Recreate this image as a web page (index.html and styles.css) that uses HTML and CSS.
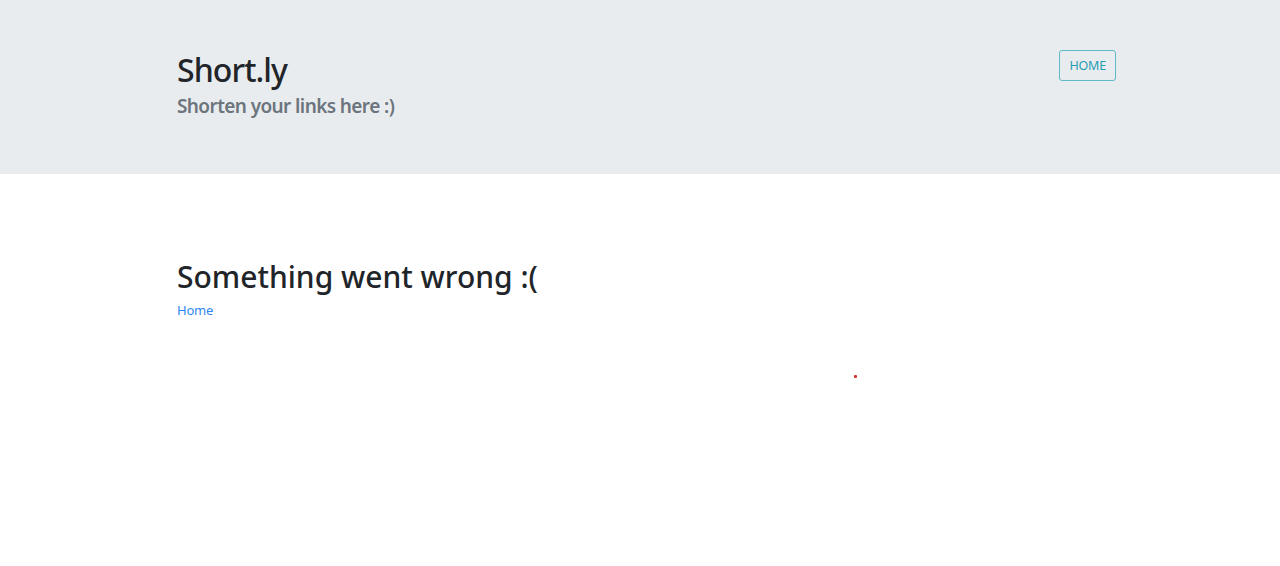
FILE: index.html
```html
<!DOCTYPE html>
<html lang="en">
<head>
<meta charset="utf-8">
<title>Short.ly</title>
<link rel="stylesheet" href="styles.css">
</head>
<body>
<header class="jumbotron">
  <div class="container header-row">
    <div class="brand">
      <h1 class="title">Short.ly</h1>
      <p class="subtitle">Shorten your links here :)</p>
    </div>
    <a class="btn-home" href="#">HOME</a>
  </div>
</header>
<main class="container content">
  <h2 class="error-title">Something went wrong :(</h2>
  <a class="home-link" href="#">Home</a>
</main>
<span class="dot"></span>
</body>
</html>
```
FILE: styles.css
```css
html, body {
  margin: 0;
  padding: 0;
}
body {
  font-family: "Noto Sans", "Open Sans", sans-serif;
  color: #212529;
  background: #fff;
}
.container {
  padding-left: 177px;
  padding-right: 164px;
}
.jumbotron {
  background: #e9ecef;
  height: 174px;
  box-sizing: border-box;
  padding-top: 49px;
}
.header-row {
  display: flex;
  justify-content: space-between;
  align-items: flex-start;
}
.title {
  margin: 0;
  font-size: 32px;
  font-weight: 500;
  line-height: 42px;
  letter-spacing: -0.9px;
}
.subtitle {
  margin: 3px 0 0;
  font-size: 19px;
  font-weight: 600;
  color: #6c757d;
  line-height: 24px;
  letter-spacing: -0.6px;
}
.btn-home {
  margin-top: 1px;
  display: inline-block;
  box-sizing: border-box;
  height: 31px;
  padding: 0 9px;
  line-height: 29px;
  border: 1px solid #5fb9c9;
  border-radius: 3px;
  color: #1f9db3;
  font-size: 12.5px;
  letter-spacing: -0.2px;
  text-decoration: none;
}
.content {
  padding-top: 85px;
}
.error-title {
  margin: 0;
  font-size: 30px;
  font-weight: 500;
  line-height: 36px;
}
.home-link {
  display: inline-block;
  margin-top: 6px;
  font-size: 13px;
  color: #2f86f2;
  letter-spacing: -0.2px;
  text-decoration: none;
}
.dot {
  position: absolute;
  left: 854px;
  top: 375px;
  width: 3px;
  height: 3px;
  background: #d9302a;
  border-radius: 1px;
}
```
